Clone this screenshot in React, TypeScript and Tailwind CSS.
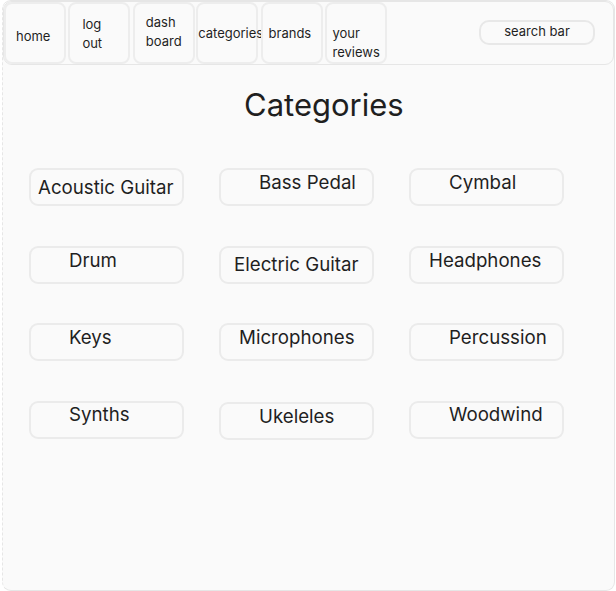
import React from "react";

const navItems: { lines: string[]; cls: string }[] = [
  { lines: ["home"], cls: "pl-[10px] pt-[23px]" },
  { lines: ["log", "out"], cls: "pl-[12px] pt-[11px]" },
  { lines: ["dash", "board"], cls: "pl-[11px] pt-[9px]" },
  { lines: ["categories"], cls: "pl-[0px] pt-[20px] -ml-[1px]" },
  { lines: ["brands"], cls: "pl-[6px] pt-[20px]" },
  { lines: ["your", "reviews"], cls: "pl-[5.5px] pt-[20px]" },
];

const cats: { name: string; cls: string; box?: string }[] = [
  { name: "Acoustic Guitar", cls: "pl-[7px] pt-[7.5px]" },
  { name: "Bass Pedal", cls: "pl-[38px] pt-[3px]" },
  { name: "Cymbal", cls: "pl-[38px] pt-[3px]" },
  { name: "Drum", cls: "pl-[38px] pt-[3px]" },
  { name: "Electric Guitar", cls: "pl-[13px] pt-[7.5px]" },
  { name: "Headphones", cls: "pl-[18px] pt-[3px]" },
  { name: "Keys", cls: "pl-[38px] pt-[2.5px]" },
  { name: "Microphones", cls: "pl-[18px] pt-[2.5px]" },
  { name: "Percussion", cls: "pl-[38px] pt-[2.5px]" },
  { name: "Synths", cls: "pl-[38px] pt-[2.5px]" },
  { name: "Ukeleles", cls: "pl-[38px] pt-[2.5px]", box: "mt-[1.5px]" },
  { name: "Woodwind", cls: "pl-[38px] pt-[2px]" },
];

export default function App() {
  return (
    <div className="h-[591px] w-[616px] overflow-hidden bg-white font-['Inter',sans-serif] text-[#1f1f1f]">
      <div className="ml-[2px] mr-[1px] flex h-[591px] flex-col rounded-[9px] border border-[#e6e6e6] [border-left-style:dashed] bg-[#fafafa]">
        <nav className="flex h-[64px] shrink-0 rounded-[9px] border border-[#e6e6e6] bg-[#fafafa]">
          <div className="flex gap-[2.4px]">
            {navItems.map((it, i) => (
              <div
                key={i}
                className={`h-[62px] w-[62px] shrink-0 overflow-visible whitespace-nowrap rounded-[8px] border-2 border-[#ededed] text-[13px] leading-[19px] ${it.cls}`}
              >
                {it.lines.map((l, j) => (
                  <div key={j}>{l}</div>
                ))}
              </div>
            ))}
          </div>
          <div className="ml-auto mr-[18px] mt-[18px] flex h-[25px] w-[116px] items-center justify-center rounded-[10px] border-2 border-[#e8e8e8] pb-[2px] text-[13px]">
            search bar
          </div>
        </nav>
        <h1 className="mt-[22px] pl-[241px] text-[31px] leading-[36px]">Categories</h1>
        <div className="mt-[45px] grid grid-cols-[155px_155px_155px] gap-x-[35px] gap-y-[39.5px] pl-[26px]">
          {cats.map((c) => (
            <div
              key={c.name}
              className={`h-[38px] rounded-[9px] border-2 border-[#ebebeb] bg-[#fafafa] ${c.box ?? ""}`}
            >
              <div className={`whitespace-nowrap text-[18.7px] leading-[20px] ${c.cls}`}>{c.name}</div>
            </div>
          ))}
        </div>
      </div>
    </div>
  );
}
